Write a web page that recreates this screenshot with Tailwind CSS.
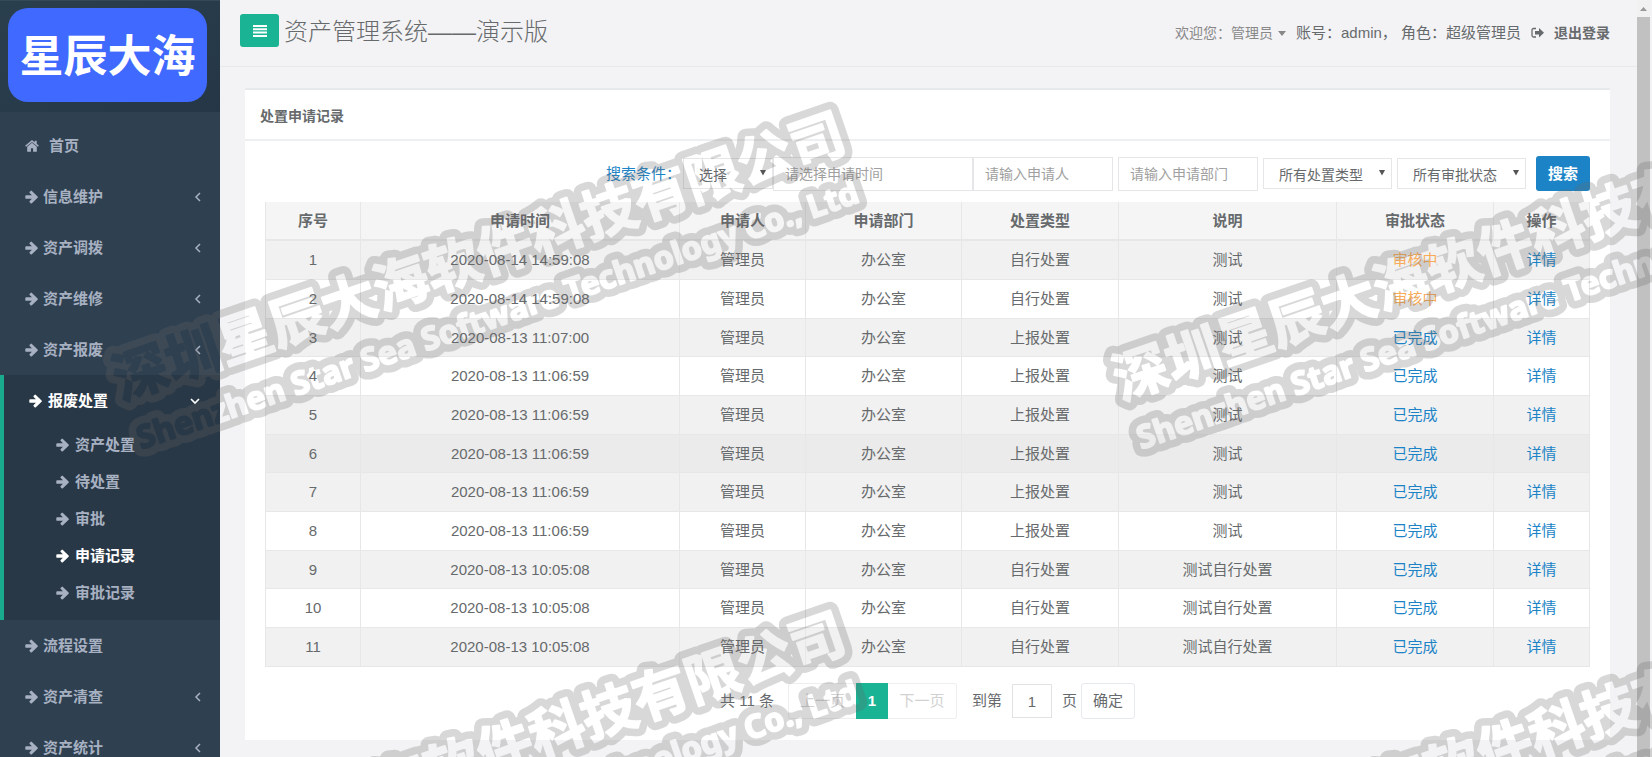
<!DOCTYPE html>
<html lang="zh-CN">
<head>
<meta charset="utf-8">
<title>资产管理系统</title>
<script src="https://cdn.jsdelivr.net/npm/@tailwindcss/browser@4"></script>
</head>
<body class="flex h-screen overflow-hidden bg-[#f3f3f5] font-['Liberation_Sans','Noto_Sans_CJK_SC',sans-serif] text-[15px] leading-5 text-[#676a6c]">

<svg class="hidden" aria-hidden="true">
  <symbol id="arrow" viewBox="0 0 14 14"><path d="M1.2 5.300h5.700L4.700 3.100a.9.9 0 0 1 0-1.300l.9-.9a.9.9 0 0 1 1.300 0l5.700 5.500a.9.9 0 0 1 0 1.300l-5.700 5.500a.9.9 0 0 1-1.300 0l-.9-.9a.9.9 0 0 1 0-1.300l2.200-2.200H1.200a.9.9 0 0 1-.9-.9V6.200a.9.9 0 0 1 .9-.9z" fill="currentColor"/></symbol>
  <symbol id="left" viewBox="0 0 8 12"><path d="M6 2 2 6l4 4" fill="none" stroke="currentColor" stroke-width="1.500"/></symbol>
  <symbol id="tri" viewBox="0 0 8 8"><path d="M.5 1h7L4 7.500z" fill="#555"/></symbol>
</svg>

<aside class="flex w-[220px] shrink-0 flex-col overflow-hidden bg-[#2f4050] font-semibold text-[#a7b1c2]">
  <div class="h-[112px] shrink-0 border-t border-[#33495a] bg-linear-to-br from-[#2a3f4e] to-[#253746] pt-[7px] pr-[13px] pl-2">
    <div class="flex h-[94px] items-center justify-center rounded-[20px] bg-[#4069ff] pt-1 text-[44px] font-bold text-white">星辰大海</div>
  </div>
  <nav>
    <a href="#" class="flex h-[59px] items-center gap-[10px] pt-2 pl-[25px]">
      <svg class="h-[14px] w-[14px]" viewBox="0 0 14 14" fill="currentColor"><path d="M7 3.700 2.200 7.700V12.700h3.700V9.200h2.200v3.500h3.700V7.700zM7 .9.100 6.700l1 1.100L7 2.900l5.900 4.900 1-1.100-2.200-1.900V1.700H9.700v1.500z"/></svg>
      <span>首页</span></a>
    <a href="#" class="flex h-[51px] items-center gap-1 pr-[18px] pl-[25px]"><svg class="h-[14px] w-[14px]"><use href="#arrow"/></svg><span class="flex-1">信息维护</span><svg class="h-3 w-2"><use href="#left"/></svg></a>
    <a href="#" class="flex h-[51px] items-center gap-1 pr-[18px] pl-[25px]"><svg class="h-[14px] w-[14px]"><use href="#arrow"/></svg><span class="flex-1">资产调拨</span><svg class="h-3 w-2"><use href="#left"/></svg></a>
    <a href="#" class="flex h-[51px] items-center gap-1 pr-[18px] pl-[25px]"><svg class="h-[14px] w-[14px]"><use href="#arrow"/></svg><span class="flex-1">资产维修</span><svg class="h-3 w-2"><use href="#left"/></svg></a>
    <a href="#" class="flex h-[51px] items-center gap-1 pr-[18px] pl-[25px]"><svg class="h-[14px] w-[14px]"><use href="#arrow"/></svg><span class="flex-1">资产报废</span><svg class="h-3 w-2"><use href="#left"/></svg></a>
    <div class="border-l-4 border-[#19aa8d] bg-[#293846] pb-[9px]">
      <a href="#" class="flex h-[51px] items-center gap-[5px] pr-5 pl-[25px] font-bold text-white"><svg class="h-[14px] w-[14px]"><use href="#arrow"/></svg><span class="flex-1">报废处置</span><svg class="h-2 w-[10px]" viewBox="0 0 10 8"><path d="m1 2 4 4 4-4" fill="none" stroke="currentColor" stroke-width="1.700"/></svg></a>
      <a href="#" class="flex h-[37px] items-center gap-[5px] pl-[52px]"><svg class="h-[14px] w-[14px]"><use href="#arrow"/></svg>资产处置</a>
      <a href="#" class="flex h-[37px] items-center gap-[5px] pl-[52px]"><svg class="h-[14px] w-[14px]"><use href="#arrow"/></svg>待处置</a>
      <a href="#" class="flex h-[37px] items-center gap-[5px] pl-[52px]"><svg class="h-[14px] w-[14px]"><use href="#arrow"/></svg>审批</a>
      <a href="#" class="flex h-[37px] items-center gap-[5px] pl-[52px] font-bold text-white"><svg class="h-[14px] w-[14px]"><use href="#arrow"/></svg>申请记录</a>
      <a href="#" class="flex h-[37px] items-center gap-[5px] pl-[52px]"><svg class="h-[14px] w-[14px]"><use href="#arrow"/></svg>审批记录</a>
    </div>
    <a href="#" class="flex h-[51px] items-center gap-1 pr-[18px] pl-[25px]"><svg class="h-[14px] w-[14px]"><use href="#arrow"/></svg><span class="flex-1">流程设置</span></a>
    <a href="#" class="flex h-[51px] items-center gap-1 pr-[18px] pl-[25px]"><svg class="h-[14px] w-[14px]"><use href="#arrow"/></svg><span class="flex-1">资产清查</span><svg class="h-3 w-2"><use href="#left"/></svg></a>
    <a href="#" class="flex h-[51px] items-center gap-1 pr-[18px] pl-[25px]"><svg class="h-[14px] w-[14px]"><use href="#arrow"/></svg><span class="flex-1">资产统计</span><svg class="h-3 w-2"><use href="#left"/></svg></a>
  </nav>
</aside>

<div class="min-w-0 flex-1">
  <header class="flex h-[67px] items-start justify-between border-b border-[#e7eaec] pr-[27px] pl-5">
    <div class="flex items-start gap-[5px] pt-[14px]">
      <button aria-label="菜单" class="flex h-[33px] w-[39px] items-center justify-center rounded-[3px] bg-[#1ab394] text-white">
        <svg class="h-3 w-[14px]" viewBox="0 0 14 12" fill="currentColor"><path d="M0 0h14v2H0zM0 3.300h14v2H0zM0 6.600h14v2H0zM0 9.900h14v2H0z"/></svg>
      </button>
      <h1 class="pt-[2px] text-2xl font-light">资产管理系统——演示版</h1>
    </div>
    <div class="flex items-center pt-[23px]">
      <span class="text-sm text-[#888]">欢迎您：</span>
      <button class="flex items-center gap-[5px] text-sm text-[#888]">管理员<svg class="h-[5px] w-2" viewBox="0 0 8 5"><path d="M0 0h8L4 5z" fill="currentColor"/></svg></button>
      <span class="ml-[10px]">账号：admin，&nbsp;角色：超级管理员</span>
      <a href="#" class="ml-[10px] flex items-center gap-[10px] text-sm font-bold"><svg class="h-3 w-[13px]" viewBox="0 0 13 12"><path d="M5 1.500H2.500a1.500 1.500 0 0 0-1.500 1.500v5.500A1.500 1.500 0 0 0 2.500 10H5" fill="none" stroke="currentColor" stroke-width="1.300"/><path d="M4 4h4V1l5 4.800L8 10.600V7.600H4z" fill="currentColor"/></svg>退出登录</a>
    </div>
  </header>

  <main class="mt-[21px] mr-[27px] ml-[25px] border-t-2 border-[#e7eaec] bg-white">
    <h2 class="flex h-[51px] items-center border-b-2 border-[#eeeff0] px-[15px] pt-[2px] text-sm font-bold">处置申请记录</h2>
    <div class="px-5 pt-[15px] pb-[21px]">
      <form class="flex h-[35px] items-center justify-end">
        <label for="kind" class="mr-[2px] text-[#1c84c6]">搜索条件：</label>
        <div class="relative w-[90px]">
          <select id="kind" class="h-[31px] w-full appearance-none border border-[#e5e6e7] pt-[3px] pl-[15px] text-sm"><option>选择</option></select>
          <svg class="absolute top-[11px] right-[6px] h-[7px] w-2"><use href="#tri"/></svg>
        </div>
        <input aria-label="申请时间" placeholder="请选择申请时间" class="h-[34px] w-[200px] border border-[#e5e6e7] px-[11px] text-sm placeholder:text-[#a0a0a0]">
        <input aria-label="申请人" placeholder="请输入申请人" class="h-[34px] w-[140px] border border-[#e5e6e7] px-[11px] text-sm placeholder:text-[#a0a0a0]">
        <input aria-label="申请部门" placeholder="请输入申请部门" class="ml-[5px] h-[34px] w-[140px] border border-[#e5e6e7] px-[11px] text-sm placeholder:text-[#a0a0a0]">
        <div class="relative ml-[5px] w-[129px]">
          <select aria-label="处置类型" class="h-[31px] w-full appearance-none border border-[#e5e6e7] pt-[3px] pl-[15px] text-sm"><option>所有处置类型</option></select>
          <svg class="absolute top-[11px] right-[6px] h-[7px] w-2"><use href="#tri"/></svg>
        </div>
        <div class="relative ml-[5px] w-[129px]">
          <select aria-label="审批状态" class="h-[31px] w-full appearance-none border border-[#e5e6e7] pt-[3px] pl-[15px] text-sm"><option>所有审批状态</option></select>
          <svg class="absolute top-[11px] right-[6px] h-[7px] w-2"><use href="#tri"/></svg>
        </div>
        <button type="button" class="ml-[10px] h-[35px] w-[54px] rounded-[3px] bg-[#1c84c6] font-semibold text-white">搜索</button>
      </form>

      <table class="mt-[11px] w-full table-fixed border-separate border-spacing-0 border-l border-[#e7e7e7] text-center [&_a]:text-[#1c84c6] [&_td]:border-r [&_td]:border-b [&_td]:border-[#e7e7e7] [&_th]:border-r [&_th]:border-b-2 [&_th]:border-[#e7e7e7]">
        <colgroup><col class="w-[95px]"><col class="w-[319px]"><col class="w-[126px]"><col class="w-[156px]"><col class="w-[157px]"><col class="w-[218px]"><col class="w-[157px]"><col class="w-[96px]"></colgroup>
        <thead><tr class="h-[39px] bg-[#f5f5f6]"><th>序号</th><th>申请时间</th><th>申请人</th><th>申请部门</th><th>处置类型</th><th>说明</th><th>审批状态</th><th>操作</th></tr></thead>
        <tbody class="[&>tr]:h-[39px] [&>tr:nth-child(3n)]:h-[38px] [&>tr:nth-child(odd)]:bg-[#f1f1f1]">
          <tr><td>1</td><td>2020-08-14 14:59:08</td><td>管理员</td><td>办公室</td><td>自行处置</td><td>测试</td><td class="text-[#f8ac59]">审核中</td><td><a href="#">详情</a></td></tr>
          <tr><td>2</td><td>2020-08-14 14:59:08</td><td>管理员</td><td>办公室</td><td>自行处置</td><td>测试</td><td class="text-[#f8ac59]">审核中</td><td><a href="#">详情</a></td></tr>
          <tr><td>3</td><td>2020-08-13 11:07:00</td><td>管理员</td><td>办公室</td><td>上报处置</td><td>测试</td><td class="text-[#1c84c6]">已完成</td><td><a href="#">详情</a></td></tr>
          <tr><td>4</td><td>2020-08-13 11:06:59</td><td>管理员</td><td>办公室</td><td>上报处置</td><td>测试</td><td class="text-[#1c84c6]">已完成</td><td><a href="#">详情</a></td></tr>
          <tr><td>5</td><td>2020-08-13 11:06:59</td><td>管理员</td><td>办公室</td><td>上报处置</td><td>测试</td><td class="text-[#1c84c6]">已完成</td><td><a href="#">详情</a></td></tr>
          <tr class="bg-[#ebebeb]"><td>6</td><td>2020-08-13 11:06:59</td><td>管理员</td><td>办公室</td><td>上报处置</td><td>测试</td><td class="text-[#1c84c6]">已完成</td><td><a href="#">详情</a></td></tr>
          <tr><td>7</td><td>2020-08-13 11:06:59</td><td>管理员</td><td>办公室</td><td>上报处置</td><td>测试</td><td class="text-[#1c84c6]">已完成</td><td><a href="#">详情</a></td></tr>
          <tr><td>8</td><td>2020-08-13 11:06:59</td><td>管理员</td><td>办公室</td><td>上报处置</td><td>测试</td><td class="text-[#1c84c6]">已完成</td><td><a href="#">详情</a></td></tr>
          <tr><td>9</td><td>2020-08-13 10:05:08</td><td>管理员</td><td>办公室</td><td>自行处置</td><td>测试自行处置</td><td class="text-[#1c84c6]">已完成</td><td><a href="#">详情</a></td></tr>
          <tr><td>10</td><td>2020-08-13 10:05:08</td><td>管理员</td><td>办公室</td><td>自行处置</td><td>测试自行处置</td><td class="text-[#1c84c6]">已完成</td><td><a href="#">详情</a></td></tr>
          <tr><td>11</td><td>2020-08-13 10:05:08</td><td>管理员</td><td>办公室</td><td>自行处置</td><td>测试自行处置</td><td class="text-[#1c84c6]">已完成</td><td><a href="#">详情</a></td></tr>
        </tbody>
      </table>

      <div class="mt-4 flex h-9 items-center justify-center">
        <span class="mr-[14px]">共 11 条</span>
        <button disabled class="h-9 w-[68px] rounded-l-[3px] border border-r-0 border-[#eeeeee] text-[#d2d2d2]">上一页</button>
        <button class="h-9 w-8 bg-[#1ab394] font-bold text-white">1</button>
        <button disabled class="h-9 w-[69px] rounded-r-[3px] border border-l-0 border-[#eeeeee] text-[#d2d2d2]">下一页</button>
        <label for="page" class="mr-[10px] ml-[15px]">到第</label>
        <input id="page" value="1" class="h-[34px] w-10 border border-[#e2e2e2] text-center">
        <span class="mr-1 ml-[10px]">页</span>
        <button class="h-9 w-[54px] rounded-[3px] border border-[#e7eaec]">确定</button>
      </div>
    </div>
  </main>
</div>

<div class="mr-[2px] flex w-[13px] shrink-0 flex-col bg-[#f1f1f1]" aria-hidden="true">
  <div class="flex h-[17px] items-center justify-center"><svg class="h-1 w-[7px]" viewBox="0 0 7 4"><path d="M0 4h7L3.500 0z" fill="#999"/></svg></div>
  <div class="flex-1 bg-[#c1c1c1]"></div>
</div>

<svg class="pointer-events-none fixed inset-0 h-full w-full" aria-hidden="true">
  <defs>
    <g id="words">
      <text x="-26" y="21" font-size="55" font-weight="700" font-family="Noto Sans CJK SC, sans-serif">深圳星辰大海软件科技有限公司</text>
      <text x="-23" y="74" font-size="32" font-weight="700" font-family="Noto Sans, sans-serif">Shenzhen Star Sea Software Technology Co., Ltd</text>
    </g>
    <g id="mark">
      <use href="#words" fill="#fff" stroke="#fff" stroke-width="17" stroke-linejoin="round"/>
      <use href="#words" fill="#000" stroke="#000" stroke-width="2" stroke-linejoin="round"/>
    </g>
    <mask id="outline" maskUnits="userSpaceOnUse" x="0" y="0" width="100%" height="100%">
      <use href="#mark" transform="translate(139 372) rotate(-19)"/>
      <use href="#mark" transform="translate(1139 372) rotate(-19)"/>
      <use href="#mark" transform="translate(139 872) rotate(-19)"/>
      <use href="#mark" transform="translate(1139 872) rotate(-19)"/>
    </mask>
  </defs>
  <rect width="100%" height="100%" fill="#696464" fill-opacity=".25" mask="url(#outline)"/>
</svg>
</body>
</html>
